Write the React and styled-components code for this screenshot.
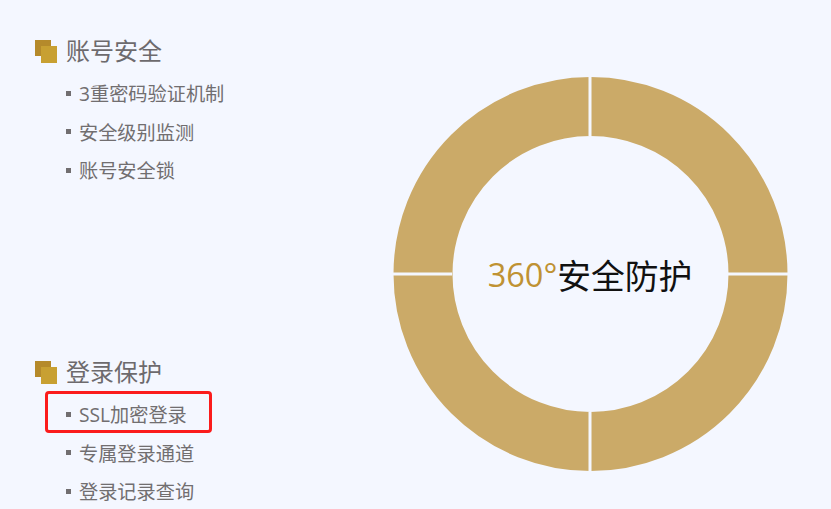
import React from "react";
import styled, { createGlobalStyle } from "styled-components";

const Global = createGlobalStyle`
  html, body { margin: 0; padding: 0; background: #f4f7ff; overflow: hidden; }
  body { font-family: "Open Sans", "Noto Sans CJK SC", sans-serif; }
`;

const Page = styled.div`
  width: 831px;
  height: 509px;
  overflow: hidden;
  display: flex;
  justify-content: space-between;
  background: #f4f7ff;
  padding: 36px 43px 0 35px;
  box-sizing: border-box;
`;

const Left = styled.div`
  display: flex;
  flex-direction: column;
  gap: 167.5px;
`;

const Section = styled.section`
  display: flex;
  flex-direction: column;
`;

const Heading = styled.div`
  display: flex;
  align-items: center;
  gap: 9px;
  height: 30px;
  margin-bottom: 8px;
  font-size: 24px;
  line-height: 30px;
  color: #6d6a6d;
`;

const List = styled.ul`
  list-style: none;
  margin: 0;
  padding: 0 0 0 31px;
`;

const Item = styled.li`
  display: flex;
  align-items: center;
  gap: 8px;
  height: 38.5px;
  font-size: 19.2px;
  color: #716e70;
  white-space: nowrap;
  &::before {
    content: "";
    width: 5px;
    height: 5px;
    background: #716e70;
    flex: none;
  }
`;

const Highlight = styled.span`
  position: absolute;
  left: 45px;
  top: 391px;
  width: 167px;
  height: 42px;
  box-sizing: border-box;
  border: 3px solid #fb1c1c;
  border-radius: 4px;
`;

const RingBox = styled.div`
  position: relative;
  width: 396px;
  height: 396px;
  margin-top: 40px;
  flex: none;
`;

const Center = styled.div`
  position: absolute;
  inset: 0;
  display: flex;
  align-items: center;
  justify-content: center;
  font-size: 33.75px;
  color: #111;
  white-space: nowrap;
`;

const Gold = styled.span`
  color: #bf9233;
  font-size: 32.5px;
`;

const Cube = () => (
  <svg width="22" height="23" viewBox="0 0 22 23" style={{ flex: "none" }}>
    <rect x="0" y="0" width="16" height="16" fill="#b58a2b" />
    <rect x="6" y="6" width="16" height="17" fill="#c8a032" />
  </svg>
);

const Ring = () => (
  <svg width="396" height="396" viewBox="0 0 396 396">
    <circle cx="198.5" cy="198" r="167.5" fill="none" stroke="#cbaa68" strokeWidth="59" />
    <rect x="196.5" y="0" width="3" height="60" fill="#f4f7ff" />
    <rect x="196.5" y="336" width="3" height="60" fill="#f4f7ff" />
    <rect x="0" y="196.5" width="60" height="3" fill="#f4f7ff" />
    <rect x="336" y="196.5" width="60" height="3" fill="#f4f7ff" />
  </svg>
);

const groups = [
  { title: "账号安全", items: ["3重密码验证机制", "安全级别监测", "账号安全锁"] },
  { title: "登录保护", items: ["SSL加密登录", "专属登录通道", "登录记录查询"] },
];

export default function App() {
  return (
    <>
      <Global />
      <Page>
        <Left>
          {groups.map((g) => (
            <Section key={g.title}>
              <Heading>
                <Cube />
                {g.title}
              </Heading>
              <List>
                {g.items.map((t) => (
                  <Item key={t}>{t}</Item>
                ))}
              </List>
            </Section>
          ))}
        </Left>
        <RingBox>
          <Ring />
          <Center>
            <Gold>360°</Gold>安全防护
          </Center>
        </RingBox>
        <Highlight />
      </Page>
    </>
  );
}
